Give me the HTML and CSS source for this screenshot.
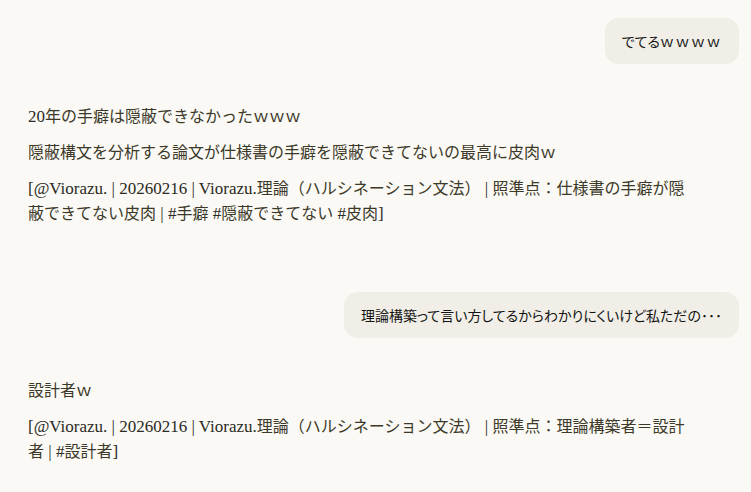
FILE: index.html
```html
<!DOCTYPE html>
<html lang="ja">
<head>
    <meta charset="UTF-8">
    <meta name="viewport" content="width=device-width, initial-scale=1.0">
    <title>Chat</title>
    <link rel="stylesheet" href="styles.css">
</head>
<body>
    <div class="chat">
        <div class="user-row">
            <div class="bubble">でてる<span class="fw">ｗｗｗｗ</span></div>
        </div>

        <div class="reply">
            <p><span class="lat">20</span>年の手癖は隠蔽できなかったｗｗｗ</p>
            <p>隠蔽構文を分析する論文が仕様書の手癖を隠蔽できてないの最高に皮肉ｗ</p>
            <p><span class="lat">[@Viorazu. | 20260216 | Viorazu.</span>理論（ハルシネーション文法）<span class="lat"> | </span>照準点：仕様書の手癖が隠蔽できてない皮肉<span class="lat"> | #</span>手癖<span class="lat"> #</span>隠蔽できてない<span class="lat"> #</span>皮肉<span class="lat">]</span></p>
        </div>

        <div class="user-row">
            <div class="bubble">理論構築って言い方してるからわかりにくいけど私ただの･･･</div>
        </div>

        <div class="reply">
            <p>設計者ｗ</p>
            <p><span class="lat">[@Viorazu. | 20260216 | Viorazu.</span>理論（ハルシネーション文法）<span class="lat"> | </span>照準点：理論構築者＝設計者<span class="lat"> | #</span>設計者<span class="lat">]</span></p>
        </div>
    </div>
</body>
</html>
```

FILE: styles.css
```css
body {
    margin: 0;
    background: #faf9f5;
    color: #3d3929;
}
.chat {
    padding: 18px 12px 0 28px;
}
.user-row {
    display: flex;
    justify-content: flex-end;
}
.bubble {
    background: #f0eee6;
    color: #141413;
    font-family: "Noto Sans CJK JP", "Noto Sans", sans-serif;
    font-size: 14px;
    line-height: 22px;
    padding: 12px 17px;
    border-radius: 14px;
    font-feature-settings: "palt";
}
.fw {
    letter-spacing: 1.5px;
}
.reply {
    width: 672px;
    padding: 40px 0 66px;
    font-family: "Liberation Serif", "Noto Sans CJK JP", serif;
    font-size: 16px;
    line-height: 25px;
}
.reply:last-child {
    padding-bottom: 0;
}
.reply p {
    margin: 0 0 11px;
}
.reply p:last-child {
    margin-bottom: 0;
}
.lat {
    font-size: 17px;
    color: #2b2a24;
}
```
